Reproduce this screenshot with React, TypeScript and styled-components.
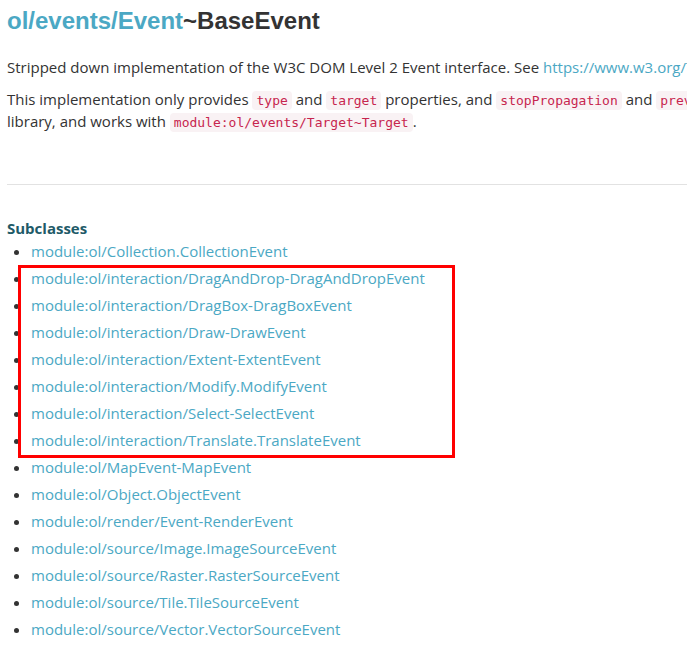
import React from "react";
import styled, { createGlobalStyle } from "styled-components";

const Global = createGlobalStyle`
  html, body { margin: 0; padding: 0; background: #fff; overflow: hidden; }
  body { font-family: "Open Sans", "Liberation Sans", sans-serif; color: #333; }
`;

const Page = styled.main`
  position: relative;
  width: 1300px;
  padding: 0 7px;
`;

const Title = styled.h1`
  margin: 0;
  padding-top: 6px;
  font-family: "Liberation Sans", Arial, sans-serif;
  font-weight: 700;
  font-size: 24px;
  line-height: 30px;
  color: #333;
`;

const TitleLink = styled.span`
  color: #4ba8c4;
`;

const Para = styled.p`
  margin: 0 0 10px;
  font-size: 15px;
  line-height: 22px;
  color: #333;
`;

const Description = styled.div`
  margin-top: 20px;
`;

const Link = styled.a`
  color: #4ba8c4;
  text-decoration: none;
`;

const Code = styled.code`
  font-family: "DejaVu Sans Mono", "Liberation Mono", monospace;
  font-size: 13px;
  line-height: 1;
  padding: 2px 4px;
  background: #f9f2f4;
  color: #c7254e;
  border-radius: 4px;
`;

const Rule = styled.hr`
  margin: 52px 0 0;
  border: 0;
  border-top: 1px solid #e2e2e2;
`;

const SectionTitle = styled.h3`
  margin: 33px 0 0;
  font-size: 15px;
  line-height: 20px;
  font-weight: 700;
  color: #1e5a68;
`;

const List = styled.ul`
  margin: 0;
  padding-left: 24px;
  font-size: 15px;
  line-height: 27px;
`;

const Item = styled.li`
  color: #333;
`;

const Highlight = styled.div`
  position: absolute;
  left: 18px;
  top: 265px;
  width: 431px;
  height: 187px;
  border: 3px solid #ff0000;
  pointer-events: none;
`;

const subclasses = [
  "module:ol/Collection.CollectionEvent",
  "module:ol/interaction/DragAndDrop-DragAndDropEvent",
  "module:ol/interaction/DragBox-DragBoxEvent",
  "module:ol/interaction/Draw-DrawEvent",
  "module:ol/interaction/Extent-ExtentEvent",
  "module:ol/interaction/Modify.ModifyEvent",
  "module:ol/interaction/Select-SelectEvent",
  "module:ol/interaction/Translate.TranslateEvent",
  "module:ol/MapEvent-MapEvent",
  "module:ol/Object.ObjectEvent",
  "module:ol/render/Event-RenderEvent",
  "module:ol/source/Image.ImageSourceEvent",
  "module:ol/source/Raster.RasterSourceEvent",
  "module:ol/source/Tile.TileSourceEvent",
  "module:ol/source/Vector.VectorSourceEvent",
];

export default function App() {
  return (
    <>
      <Global />
      <Page>
        <Title>
          <TitleLink>ol/events/Event</TitleLink>~BaseEvent
        </Title>
        <Description>
          <Para>
            Stripped down implementation of the W3C DOM Level 2 Event interface. See{" "}
            <Link href="#">https://www.w3.org/TR/DOM-Level-2-Events/events.html#Events-interface</Link>.
          </Para>
          <Para>
            This implementation only provides <Code>type</Code> and <Code>target</Code> properties, and{" "}
            <Code>stopPropagation</Code> and <Code>preventDefault</Code> methods. It is meant as base class for higher level events defined in the
            <br />
            library, and works with <Code>module:ol/events/Target~Target</Code>.
          </Para>
        </Description>
        <Rule />
        <SectionTitle>Subclasses</SectionTitle>
        <List>
          {subclasses.map((s) => (
            <Item key={s}>
              <Link href="#">{s}</Link>
            </Item>
          ))}
        </List>
        <Highlight />
      </Page>
    </>
  );
}
